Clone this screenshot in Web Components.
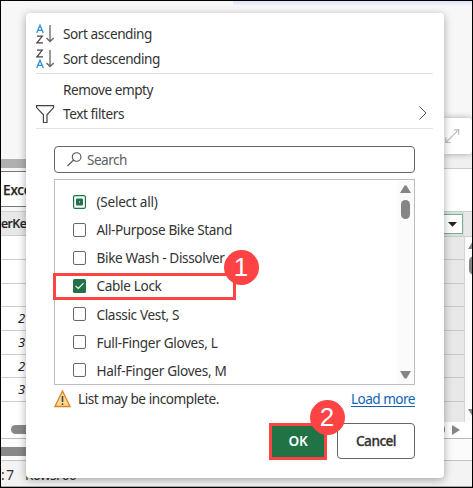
<!DOCTYPE html>
<html lang="en"><head><meta charset="utf-8"><title>Column filter</title>
<style>html,body{margin:0;width:473px;height:488px;overflow:hidden;background:#f7f7f7}</style></head>
<body><filter-screen></filter-screen>
<script>
const define=(name,html,after)=>customElements.define(name,class extends HTMLElement{
  connectedCallback(){
    if(this.shadowRoot)return;
    const t=document.createElement('template');
    t.innerHTML=typeof html==='function'?html(this):html;
    this.attachShadow({mode:'open'}).appendChild(t.content.cloneNode(true));
    if(after)after(this);
  }
});

/* Text label whose letter-spacing is tuned to reach the width given in "w". */
define('fit-text',`<style>:host{display:inline-block;white-space:pre;flex:none}span{display:inline-block}:host(.l) span{text-decoration:underline;text-underline-offset:1.5px}</style><span><slot></slot></span>`,el=>{
  const w=+el.getAttribute('w'),s=el.shadowRoot.querySelector('span'),n=el.textContent.length;
  if(w&&n)s.style.letterSpacing=((w-s.getBoundingClientRect().width)/n)+'px';
});

define('menu-row',el=>`<style>
:host{display:flex;height:25px;align-items:center;color:#333;box-sizing:border-box;padding-left:10px}
.i{width:27px;height:20px;flex:none}.i ::slotted(svg){display:block}.e{margin-left:auto;margin-right:17px}
</style><div class="i"><slot name="icon"></slot></div><slot></slot><div class="e"><slot name="end"></slot></div>`);

define('check-box',el=>{
 const s=el.getAttribute('state');
 return `<style>:host{display:block;width:13px;height:14px;flex:none}svg{display:block}</style>
 <svg width="13" height="14" viewBox="0 0 13 14">${
 s==='on'?'<rect width="13" height="14" rx="1.5" fill="#217346"/><path d="M2.5 6.8 5.3 9.5 10.6 4.2" fill="none" stroke="#fff" stroke-width="1.1"/>':
 s==='some'?'<rect x=".6" y=".6" width="11.8" height="12.8" rx="1.5" fill="#fff" stroke="#217346" stroke-width="1.2"/><rect x="3" y="3.5" width="7" height="7" rx="1" fill="#217346"/><rect x="6" y="6.5" width="1" height="1" fill="#fff"/>':
 '<rect x=".5" y=".5" width="12" height="13" rx="1.5" fill="#fff" stroke="#666"/>'}</svg>`});

define('option-row',el=>`<style>:host{display:flex;height:28.15px;align-items:center;gap:10.5px;padding-left:18px;color:#333}
check-box{margin-top:-1px}</style>
<check-box state="${el.getAttribute('state')||''}"></check-box><slot></slot>`);

define('step-badge',`<style>:host{display:flex;position:absolute;width:35px;height:35px;border-radius:50%;background:#fe4344;color:#fff;align-items:center;justify-content:center;font:26px/35px "Liberation Sans",Arial,sans-serif}</style><slot></slot>`);

define('sheet-left',`<style>
:host{display:flex;flex-direction:column;width:25px;overflow:hidden;white-space:nowrap;color:#222;background:#fff}
div{box-sizing:border-box;flex:none}
.top{height:158px;background:#f7f7f7}.bar{height:9px;background:#b0b0b0}.gap{height:3px;background:#f7f7f7}
.tab{height:36px;border-top:1px solid #777;border-bottom:1px solid #777;padding-left:2px;line-height:35px;font-weight:500;-webkit-text-stroke:.25px #222}
.space{height:4px;background:#f7f7f7}
.head{height:25px;background:#e8e8e8;border-top:1px solid #d0d0d0;border-bottom:1px solid #ccc;font-size:12.5px;font-weight:500;line-height:24px;-webkit-text-stroke:.2px #222}
.c{border-bottom:1px solid #ccc;font-style:italic;font-size:13px;padding-left:17px;line-height:23px}
.s1{height:37px;padding:23px 0 0 10px;border-bottom:1px solid #bbb}.s1 i{display:block;height:9px;border-radius:5px 0 0 5px;background:#888}
.s2{height:22px;padding-top:8px;background:#fbfbfb;border-bottom:1px solid #c4c4c4}.s2 i{display:block;height:9px;background:#888}
.st{flex:1;background:#f3f3f3}
</style><div class="top"></div><div class="bar"></div><div class="gap"></div><div class="tab"><fit-text w="32">Excel</fit-text></div><div class="space"></div><div class="head"><fit-text w="31">erKey</fit-text></div>
<div class="c" style="height:24px"></div><div class="c" style="height:24px"></div><div class="c" style="height:23px"></div><div class="c" style="height:24px">2</div><div class="c" style="height:24px">3</div><div class="c" style="height:23px">2</div><div class="c" style="height:24px">3</div>
<div class="s1"><i></i></div><div class="s2"><i></i></div><div class="st"></div>`);

define('sheet-right',`<style>
:host{display:flex;flex-direction:column;width:28px;overflow:hidden;background:#fff}
div{box-sizing:border-box;flex:none}
.top{height:117px;background:#f7f7f7}
.card{height:36px;width:28px;background:#fff;border-radius:0 4px 4px 0;box-shadow:0 0 6px #0005;position:relative;padding:11px 0 0 1px}
.card svg,.dd svg{display:block}
.gap{height:15px;background:#f0f0f0;border-bottom:1px solid #ccc}
.tab{height:42px}
.head{height:26px;display:flex;background:#e8e8e8;border-bottom:1px solid #ccc;border-top:1px solid #ccc}
.dd{width:20px;background:#cfe5d8;padding:2px 1px 2px 0}.dd span{display:block;height:20px;background:#fff;border:1px solid #8aa697;border-left:0;padding:7px 0 0 4px;box-sizing:border-box}
.body{height:185px;display:flex}.cells{width:21px;background:#e8e8e8;border-right:1px solid #d5d5d5}
.cells i{display:block;box-sizing:border-box;border-bottom:1px solid #c8c8c8}.v{width:7px;background:#fbfbfb}.v svg,.h svg{display:block}
.h{height:17px;border-bottom:1px solid #bbb}.s{height:22px;background:#fbfbfb;border-bottom:1px solid #c4c4c4}.st{flex:1;background:#f3f3f3}
</style><div class="top"></div><div class="card"><svg width="16" height="16" fill="none" stroke="#bdbdbd" stroke-width="1.2"><path d="M.8 13.5 13.5.8M9 .8h4.7v5M.8 8.5v5h5"/></svg></div><div class="gap"></div><div class="tab"></div>
<div class="head"><div class="dd"><span><svg width="9" height="6"><path d="M0 0h9L4.5 4.7z" fill="#222"/></svg></span></div></div>
<div class="body"><div class="cells"><i style="height:23px"></i><i style="height:24px"></i><i style="height:23px"></i><i style="height:24px"></i><i style="height:24px"></i><i style="height:23px"></i><i style="height:24px"></i></div>
<div class="v"><svg width="7" height="185" fill="#858585"><path d="M3 12 8 4v8z"/><rect x="4" y="19" width="11" height="19" rx="5"/><path d="M3 172h10l-5 8z"/></svg></div></div>
<div class="h"><svg width="28" height="15" fill="#858585"><rect x="-8" y="3" width="9" height="9" rx="4"/><path d="M8 3v10l8-5z"/></svg></div><div class="s"></div><div class="st"></div>`);

define('filter-panel',`<style>
:host{display:flex;flex-direction:column;position:absolute;left:26px;top:13px;width:418px;height:465px;background:#fff;border-radius:4px;box-shadow:0 2px 9px #0005;box-sizing:border-box;padding-top:8px}
hr{border:0;height:1px;background:#e3e3e3;margin:0 11px 0 10px;flex:none}
.search{margin:17px 29px 0 28px;height:27px;flex:none;box-sizing:border-box;border:1px solid #666;border-radius:4px;display:flex;align-items:center;padding-left:12px;gap:4px;color:#606060}
.list{margin:6px 29px 0 28px;height:206px;flex:none;box-sizing:border-box;border:1px solid #bdbdbd;display:flex;justify-content:space-between}
.opts{padding-top:8px}.sb{background:#fbfbfb;width:17px}.sb svg{display:block}
.note{display:flex;align-items:center;margin:1px 29px 0 28px;height:26px;flex:none}
.note .m{margin-left:7px;color:#333}.note .l{margin-left:auto;color:#0f63b5}
.btns{display:flex;justify-content:flex-end;margin:11px 29px 0 0;gap:10px}
.b{box-sizing:border-box;display:flex;align-items:center;justify-content:center;height:36px}
.ok{width:58px;height:37px;border:3px solid #fe4344;background:#217346;color:#fff;font-weight:600;padding-bottom:2px}
.ca{width:78px;border:1px solid #666;border-radius:4px;color:#333;font-weight:500;-webkit-text-stroke:.3px #333}
</style>
<menu-row><svg slot="icon" width="20" height="20"><g fill="none"><path d="M.7 9 4 1.2 7.3 9M2 6.3h4" stroke="#2b8fd8" stroke-width="1.3"/><path d="M1 12.2h5.3L1 18.8h6" stroke="#444" stroke-width="1.2"/><path d="M14 1v16M10.5 14l3.5 3.5 3.7-3.5" stroke="#666" stroke-width="1.3"/></g></svg><fit-text w="89">Sort ascending</fit-text></menu-row>
<menu-row><svg slot="icon" width="20" height="20"><g fill="none"><path d="M1 1.2h5.3L1 7.8h6" stroke="#444" stroke-width="1.2"/><path d="M.7 19 4 11.2 7.3 19M2 16.3h4" stroke="#2b8fd8" stroke-width="1.3"/><path d="M14 1v16M10.5 14l3.5 3.5 3.7-3.5" stroke="#666" stroke-width="1.3"/></g></svg><fit-text w="97">Sort descending</fit-text></menu-row>
<hr style="margin-top:2px">
<menu-row style="margin-top:3px"><fit-text w="90">Remove empty</fit-text></menu-row>
<menu-row style="height:24px"><svg slot="icon" width="20" height="20" style="margin-top:1px"><path d="M.6.6h17v2L11 9.8V17.5H7.4V9.8L.6 2.6z" fill="#fafafa" stroke="#444" stroke-width="1.2"/></svg><fit-text w="61">Text filters</fit-text><svg slot="end" style="display:block;margin-top:-2px" width="8" height="14"><path d="M.5.5 7 7 .5 13.5" fill="none" stroke="#555"/></svg></menu-row>
<hr style="margin-top:2px">
<div class="search"><svg width="16" height="16" fill="none" stroke="#555" stroke-width="1.1"><circle cx="9.6" cy="5" r="4.3"/><path d="M6.6 8 .5 14"/></svg><fit-text w="40">Search</fit-text></div>
<div class="list"><div class="opts">
<option-row state="some"><fit-text w="61">(Select all)</fit-text></option-row>
<option-row><fit-text w="135.5">All-Purpose Bike Stand</fit-text></option-row>
<option-row><fit-text w="128">Bike Wash - Dissolver</fit-text></option-row>
<option-row state="on"><fit-text w="65">Cable Lock</fit-text></option-row>
<option-row><fit-text w="82.5">Classic Vest, S</fit-text></option-row>
<option-row><fit-text w="121">Full-Finger Gloves, L</fit-text></option-row>
<option-row><fit-text w="130">Half-Finger Gloves, M</fit-text></option-row>
</div><div class="sb"><svg width="17" height="204" fill="#858585"><path d="M3 13 7.5 5.5h2L14 13z"/><rect x="4" y="20" width="9" height="19" rx="4.5"/><path d="M3 191h11l-4.5 7.5h-2z"/></svg></div></div>
<div class="note"><svg width="17" height="18"><path d="M8.5 1 16 16.5H1z" fill="#fbdc8e" stroke="#e08128" stroke-width="1.3"/><path d="M8.5 6v6M8.5 13.3v1.6" stroke="#444" stroke-width="1.6"/></svg><fit-text class="m" w="141">List may be incomplete.</fit-text><fit-text class="l" w="64">Load more</fit-text></div>
<div class="btns"><div class="b ok"><fit-text w="19">OK</fit-text></div><div class="b ca"><fit-text w="40">Cancel</fit-text></div></div>`);

define('filter-screen',`<style>
:host{display:block;position:relative;width:473px;height:488px;box-sizing:border-box;border:1px solid #000;background:#f7f7f7;font:13.6px/18px "Noto Sans","Open Sans",sans-serif;overflow:hidden}
.sheet{display:flex;justify-content:space-between;height:486px}
.over{position:absolute;inset:-1px;z-index:1}
.blue{position:absolute;left:232px;right:0;top:0;height:5px;background:linear-gradient(#d9e2f8,#f7f7f7)}
.foot{position:absolute;left:1px;right:1px;bottom:1px;height:27px;background:#f3f3f3;border-bottom:1px solid #aaa;border-top:1px solid #c4c4c4;box-sizing:border-box;color:#333;display:flex;gap:12px;line-height:27px}
.mark{position:absolute;left:53px;top:273px;width:183px;height:27px;box-sizing:border-box;border:3px solid #fe4344}
</style><div class="sheet"><sheet-left></sheet-left><sheet-right></sheet-right></div><div class="blue"></div>
<div class="over"><div class="foot"><fit-text w="12">: 7</fit-text><fit-text w="51">Rows: 66</fit-text></div><filter-panel></filter-panel><div class="mark"></div>
<step-badge style="left:223.5px;top:250px">1</step-badge><step-badge style="left:309.5px;top:400px">2</step-badge></div>`);
</script></body></html>
